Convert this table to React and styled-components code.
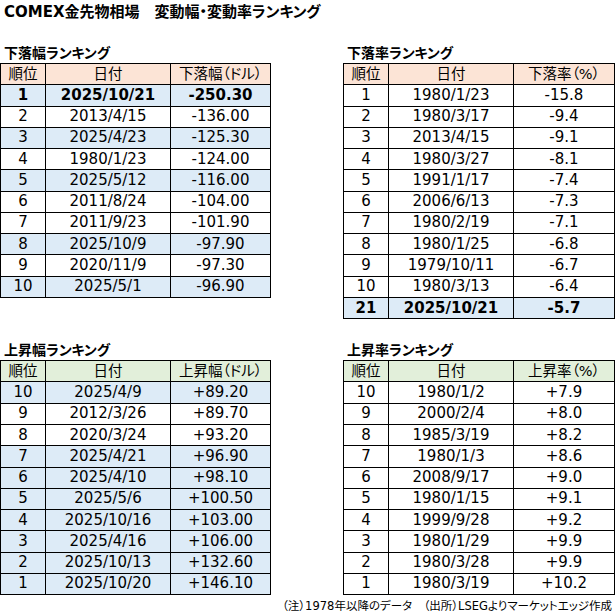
import React from "react";
import styled, { createGlobalStyle } from "styled-components";

const GlobalStyle = createGlobalStyle`
  body {
    margin: 0;
    background: #fff;
    font-family: "DejaVu Sans", "Noto Sans CJK JP", sans-serif;
    color: #000;
    font-feature-settings: "palt";
  }
`;

const downWidth = [
  { rank: 1, date: "2025/10/21", value: "-250.30", hl: true, bold: true },
  { rank: 2, date: "2013/4/15", value: "-136.00" },
  { rank: 3, date: "2025/4/23", value: "-125.30", hl: true },
  { rank: 4, date: "1980/1/23", value: "-124.00" },
  { rank: 5, date: "2025/5/12", value: "-116.00", hl: true },
  { rank: 6, date: "2011/8/24", value: "-104.00" },
  { rank: 7, date: "2011/9/23", value: "-101.90" },
  { rank: 8, date: "2025/10/9", value: "-97.90", hl: true },
  { rank: 9, date: "2020/11/9", value: "-97.30" },
  { rank: 10, date: "2025/5/1", value: "-96.90", hl: true },
];

const downRate = [
  { rank: 1, date: "1980/1/23", value: "-15.8" },
  { rank: 2, date: "1980/3/17", value: "-9.4" },
  { rank: 3, date: "2013/4/15", value: "-9.1" },
  { rank: 4, date: "1980/3/27", value: "-8.1" },
  { rank: 5, date: "1991/1/17", value: "-7.4" },
  { rank: 6, date: "2006/6/13", value: "-7.3" },
  { rank: 7, date: "1980/2/19", value: "-7.1" },
  { rank: 8, date: "1980/1/25", value: "-6.8" },
  { rank: 9, date: "1979/10/11", value: "-6.7" },
  { rank: 10, date: "1980/3/13", value: "-6.4" },
  { rank: 21, date: "2025/10/21", value: "-5.7", hl: true, bold: true },
];

const upWidth = [
  { rank: 10, date: "2025/4/9", value: "+89.20", hl: true },
  { rank: 9, date: "2012/3/26", value: "+89.70" },
  { rank: 8, date: "2020/3/24", value: "+93.20" },
  { rank: 7, date: "2025/4/21", value: "+96.90", hl: true },
  { rank: 6, date: "2025/4/10", value: "+98.10", hl: true },
  { rank: 5, date: "2025/5/6", value: "+100.50", hl: true },
  { rank: 4, date: "2025/10/16", value: "+103.00", hl: true },
  { rank: 3, date: "2025/4/16", value: "+106.00", hl: true },
  { rank: 2, date: "2025/10/13", value: "+132.60", hl: true },
  { rank: 1, date: "2025/10/20", value: "+146.10", hl: true },
];

const upRate = [
  { rank: 10, date: "1980/1/2", value: "+7.9" },
  { rank: 9, date: "2000/2/4", value: "+8.0" },
  { rank: 8, date: "1985/3/19", value: "+8.2" },
  { rank: 7, date: "1980/1/3", value: "+8.6" },
  { rank: 6, date: "2008/9/17", value: "+9.0" },
  { rank: 5, date: "1980/1/15", value: "+9.1" },
  { rank: 4, date: "1999/9/28", value: "+9.2" },
  { rank: 3, date: "1980/1/29", value: "+9.9" },
  { rank: 2, date: "1980/3/28", value: "+9.9" },
  { rank: 1, date: "1980/3/19", value: "+10.2" },
];

const RankTable = ({ title, label, rows, tone, open, last }) => (
  <Section>
    <SectionTitle>{title}</SectionTitle>
    <Table $open={open}>
      <colgroup>
        <col style={{ width: 45 }} />
        <col style={{ width: 125 }} />
        <col style={{ width: last }} />
      </colgroup>
      <thead>
        <HeadRow $tone={tone}>
          <Th>順位</Th>
          <Th>日付</Th>
          <Th>{label}</Th>
        </HeadRow>
      </thead>
      <tbody>
        {rows.map((r) => (
          <Row key={r.rank + r.date} $hl={r.hl}>
            <Td $bold={r.bold}>{r.rank}</Td>
            <Td $bold={r.bold}>{r.date}</Td>
            <Td $bold={r.bold}>{r.value}</Td>
          </Row>
        ))}
      </tbody>
    </Table>
  </Section>
);

const App = () => {
  return (
    <Page>
      <GlobalStyle />
      <Title>COMEX金先物相場　変動幅・変動率ランキング</Title>
      <Grid>
        <RankTable title="下落幅ランキング" label="下落幅（ドル）" rows={downWidth} tone="down" open last={100} />
        <RankTable title="下落率ランキング" label="下落率（%）" rows={downRate} tone="down" last={101} />
        <RankTable title="上昇幅ランキング" label="上昇幅（ドル）" rows={upWidth} tone="up" open last={100} />
        <RankTable title="上昇率ランキング" label="上昇率（%）" rows={upRate} tone="up" last={101} />
      </Grid>
      <Note>（注）1978年以降のデータ　（出所）LSEGよりマーケットエッジ作成</Note>
    </Page>
  );
};

export default App;

const Page = styled.div`
  width: 615px;
  height: 616px;
  background: #fff;
  overflow: hidden;
`;

const Title = styled.h1`
  margin: 0;
  padding-left: 4px;
  font-size: 15px;
  line-height: 24px;
  font-weight: bold;
  white-space: nowrap;
`;

const Grid = styled.div`
  display: grid;
  grid-template-columns: 271px 272px;
  column-gap: 72px;
  row-gap: 21px;
  align-items: start;
  margin-top: 19px;
`;

const Section = styled.div`
  display: flex;
  flex-direction: column;
`;

const SectionTitle = styled.h2`
  margin: 0;
  padding-left: 4px;
  font-size: 14px;
  line-height: 20px;
  font-weight: bold;
  white-space: nowrap;
`;

const Table = styled.table`
  border-collapse: collapse;
  table-layout: fixed;
  width: ${(p) => (p.$open ? "271px" : "272px")};
  border: 1px solid #000;
  border-left: ${(p) => (p.$open ? "none" : "1px solid #000")};
  font-size: 15px;
`;

const HeadRow = styled.tr`
  height: 21.27px;
  background: ${(p) => (p.$tone === "up" ? "#e2efda" : "#fce4d6")};
`;

const Row = styled.tr`
  height: 21.27px;
  background: ${(p) => (p.$hl ? "#ddebf7" : "#fff")};
`;

const Th = styled.th`
  padding: 0;
  font-size: 14.5px;
  font-weight: normal;
  text-align: center;
  border: 1px solid #000;
  white-space: nowrap;
  overflow: hidden;
  line-height: 19px;
`;

const Td = styled.td`
  padding: 0;
  text-align: center;
  border: 1px solid #000;
  white-space: nowrap;
  line-height: 19px;
  font-weight: ${(p) => (p.$bold ? "bold" : "normal")};
`;

const Note = styled.div`
  margin-top: 3px;
  padding-right: 3px;
  text-align: right;
  font-size: 11.5px;
  line-height: 16px;
  white-space: nowrap;
`;
